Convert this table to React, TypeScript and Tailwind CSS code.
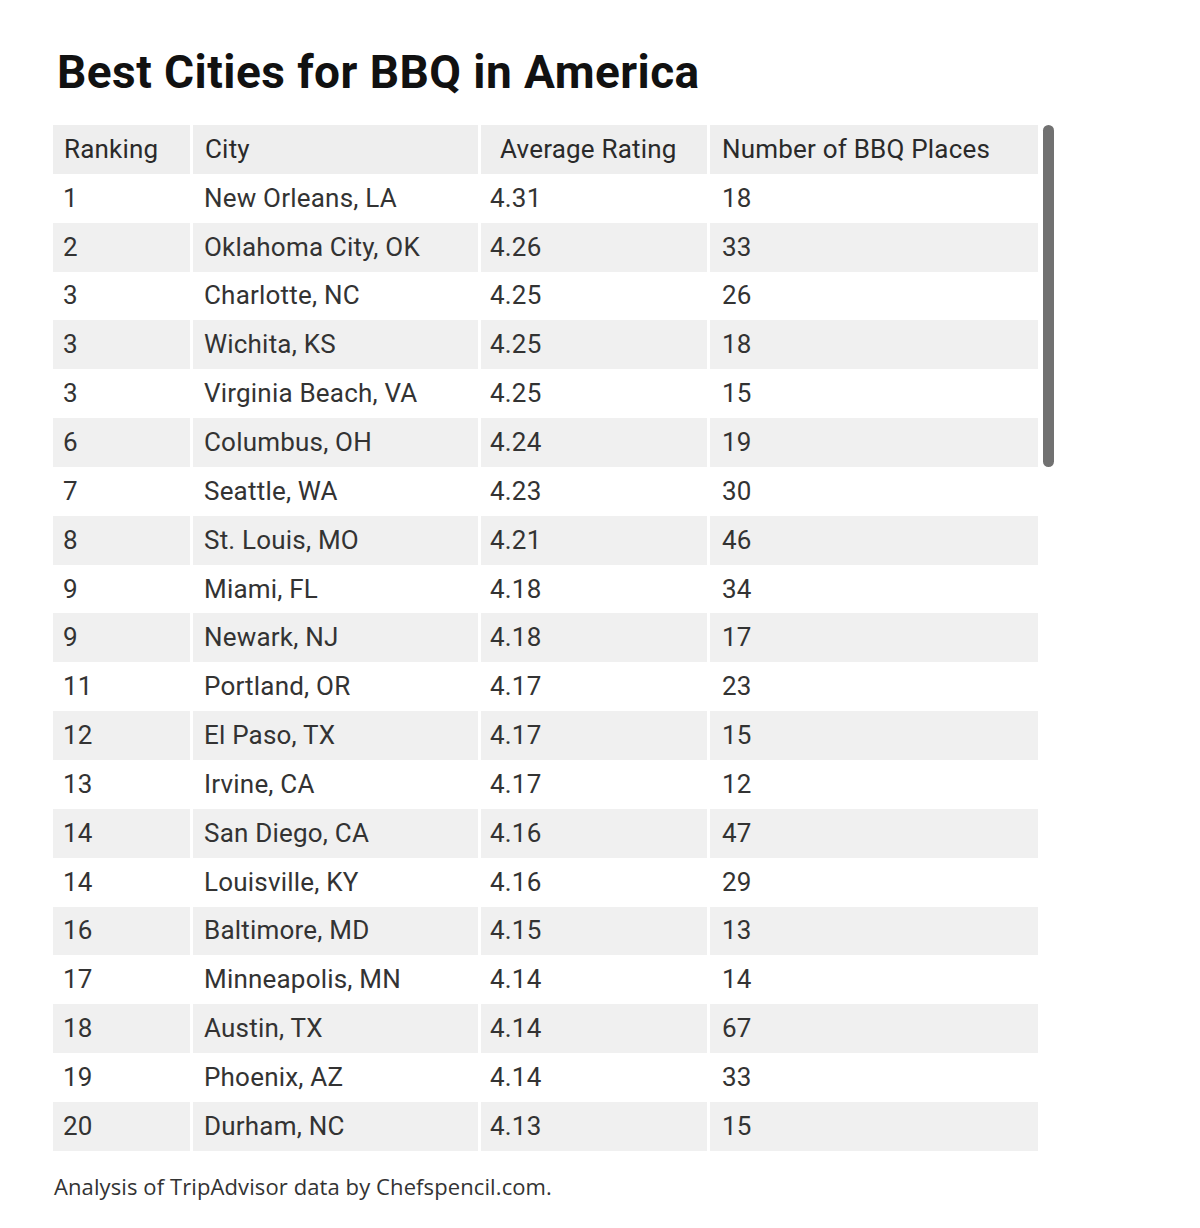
import React from "react";

const rows: [string, string, string, string][] = [
  ["1", "New Orleans, LA", "4.31", "18"],
  ["2", "Oklahoma City, OK", "4.26", "33"],
  ["3", "Charlotte, NC", "4.25", "26"],
  ["3", "Wichita, KS", "4.25", "18"],
  ["3", "Virginia Beach, VA", "4.25", "15"],
  ["6", "Columbus, OH", "4.24", "19"],
  ["7", "Seattle, WA", "4.23", "30"],
  ["8", "St. Louis, MO", "4.21", "46"],
  ["9", "Miami, FL", "4.18", "34"],
  ["9", "Newark, NJ", "4.18", "17"],
  ["11", "Portland, OR", "4.17", "23"],
  ["12", "El Paso, TX", "4.17", "15"],
  ["13", "Irvine, CA", "4.17", "12"],
  ["14", "San Diego, CA", "4.16", "47"],
  ["14", "Louisville, KY", "4.16", "29"],
  ["16", "Baltimore, MD", "4.15", "13"],
  ["17", "Minneapolis, MN", "4.14", "14"],
  ["18", "Austin, TX", "4.14", "67"],
  ["19", "Phoenix, AZ", "4.14", "33"],
  ["20", "Durham, NC", "4.13", "15"],
];

export default function App() {
  return (
    <div
      className="w-[1200px] h-[1228px] bg-white pl-[53px] pt-[49px]"
      style={{ fontFamily: "Roboto, 'Liberation Sans', sans-serif" }}
    >
      <h1 className="pl-[4px] text-[46px] leading-none font-bold text-[#111] tracking-[0.45px]">
        Best Cities for BBQ in America
      </h1>
      <div className="relative mt-[30px] w-[985px]">
        <div className="grid grid-cols-[137px_285px_226px_328px] gap-x-[3px] h-[48.85px] items-center text-[26px] tracking-[0.2px] text-[#2a2a2a]">
          <div className="bg-[#eeeeee] h-full flex items-center pl-[11px]">Ranking</div>
          <div className="bg-[#eeeeee] h-full flex items-center pl-[12px]">City</div>
          <div className="bg-[#eeeeee] h-full flex items-center pl-[19px]">Average Rating</div>
          <div className="bg-[#eeeeee] h-full flex items-center pl-[12px]">Number of BBQ Places</div>
        </div>
        {rows.map((r, i) => {
          const gray = i % 2 === 1;
          const bg = gray ? "bg-[#f0f0f0]" : "bg-white";
          return (
            <div
              key={i}
              className="grid grid-cols-[137px_285px_226px_328px] gap-x-[3px] h-[48.85px] text-[26px] tracking-[0.2px] text-[#333333]"
            >
              <div className={`${bg} h-full flex items-center pl-[10px]`}>{r[0]}</div>
              <div className={`${bg} h-full flex items-center pl-[11px]`}>{r[1]}</div>
              <div className={`${bg} h-full flex items-center pl-[9px]`}>{r[2]}</div>
              <div className={`${bg} h-full flex items-center pl-[12px]`}>{r[3]}</div>
            </div>
          );
        })}
        <div className="absolute left-[990px] top-0 w-[11px] h-[342px] rounded-full bg-[#717171]" />
      </div>
      <p
        className="mt-[24px] pl-[1px] text-[22px] leading-none tracking-[0.1px] text-[#333333]"
        style={{ fontFamily: "'Open Sans', 'Noto Sans', sans-serif" }}
      >
        Analysis of TripAdvisor data by Chefspencil.com.
      </p>
    </div>
  );
}
